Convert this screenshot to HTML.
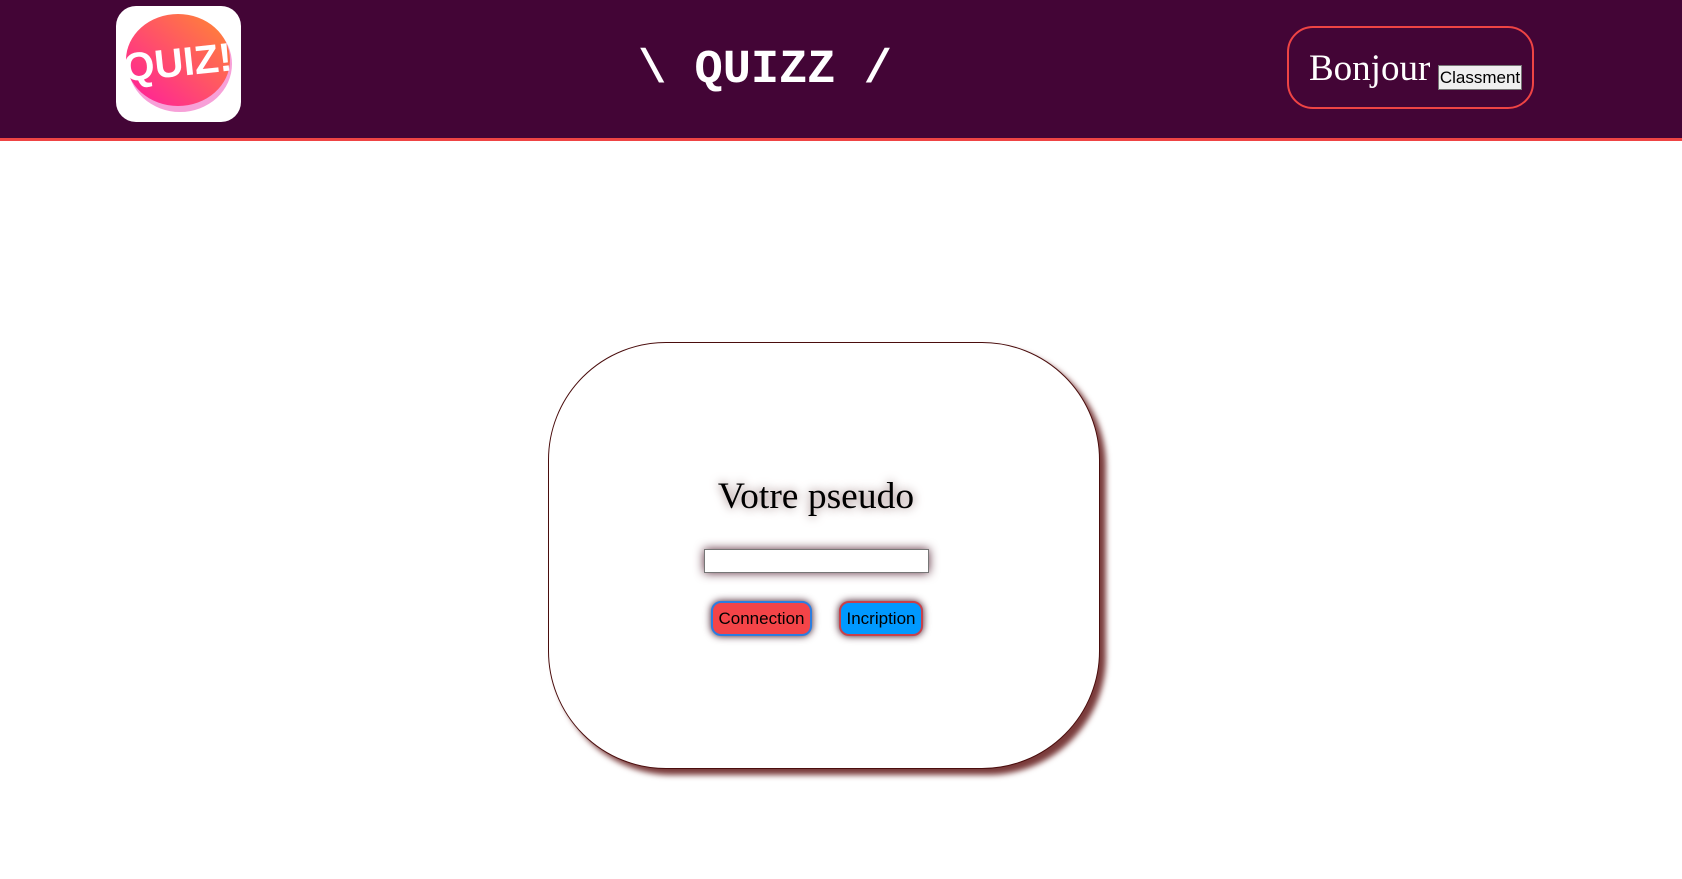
<!DOCTYPE html>
<html><head><meta charset="utf-8"><style>
body{margin:0;width:1682px;height:879px;background:#fff;position:relative;overflow:hidden;font-family:"Liberation Sans",sans-serif}
.hdr{position:absolute;left:0;top:0;width:1682px;height:138px;background:#430536;border-bottom:3px solid #ef4444}
.logo{position:absolute;left:116px;top:6px;width:125px;height:116px;background:#fff;border-radius:20px;overflow:hidden}
.title{position:absolute;left:0;width:1530px;text-align:center;top:44px;font:bold 47px "Liberation Mono",monospace;color:#fff}
.bj{position:absolute;left:1287px;top:26px;width:247px;height:83px;border:2px solid #ef4444;border-radius:26px;box-sizing:border-box}
.bj span{position:absolute;left:20px;top:19px;font:37px "Liberation Serif",serif;color:#fff}
.bj button{position:absolute;left:149px;top:37px;width:84px;height:25px;font:17px "Liberation Sans",sans-serif;padding:0;background:#efefef;border:1px solid #767676}
.card{position:absolute;left:548px;top:342px;width:552px;height:427px;border:1px solid #4a0d0d;border-radius:118px;box-sizing:border-box;box-shadow:6px 6px 6px #7a3b3b;background:#fff}
.vp{position:absolute;left:0;width:1632px;top:475px;text-align:center;font:37.5px "Liberation Serif",serif;text-shadow:0 0 10px #8a6a6a}
.inp{position:absolute;left:704px;top:549px;width:225px;height:24px;border:1px solid #767676;box-sizing:border-box;box-shadow:0 0 10px #5a2a3a;background:#fff}
.b{position:absolute;top:601px;height:35px;border-radius:10px;box-sizing:border-box;font:17px "Liberation Sans",sans-serif;line-height:31px;text-align:center;color:#000;box-shadow:0 0 8px #3a1020}
</style></head><body>
<div class="hdr">
<div class="logo"><svg width="125" height="116" viewBox="0 0 125 116"><defs><linearGradient id="g" x1="0" y1="1" x2="1" y2="0"><stop offset="0" stop-color="#ff1aa0"/><stop offset="1" stop-color="#ff8a30"/></linearGradient></defs><ellipse cx="64" cy="58" rx="52" ry="48" fill="#f7a0d8"/><ellipse cx="62" cy="54" rx="52" ry="46" fill="url(#g)"/><text x="62" y="70" text-anchor="middle" font-family="Liberation Sans" font-weight="bold" font-size="40" fill="#fff" transform="rotate(-6 62 60)">QUIZ!</text></svg></div>
<div class="title">\ QUIZZ /</div>
<div class="bj"><span>Bonjour</span><button>Classment</button></div>
</div>
<div class="card"></div>
<div class="vp">Votre pseudo</div>
<div class="inp"></div>
<div class="b" style="left:711px;width:101px;background:#f44448;border:2px solid #2b7de0">Connection</div>
<div class="b" style="left:839px;width:84px;background:#0099ff;border:2px solid #c8404a">Incription</div>
</body></html>
